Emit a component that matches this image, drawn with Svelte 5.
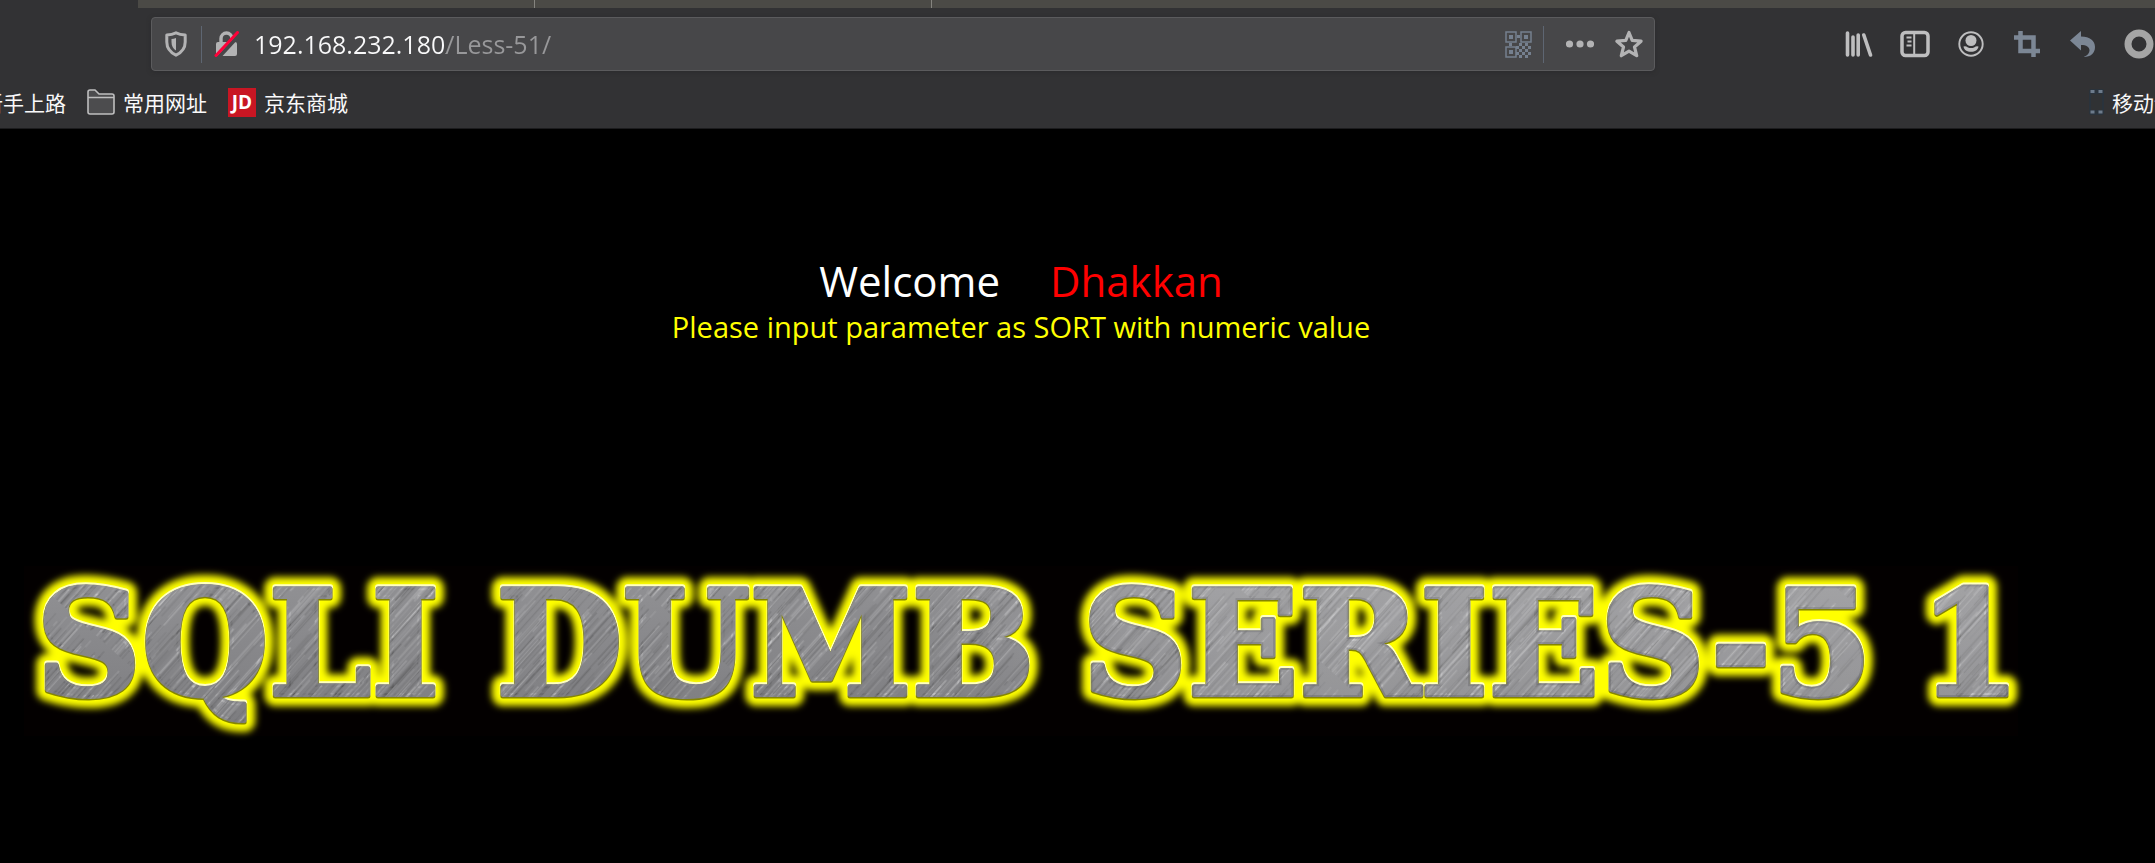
<script>
  let url = $state('192.168.232.180/Less-51/');

  // Pseudo-random diagonal scratches for the brushed-metal lettering
  let seed = 51;
  const rand = () => (seed = (seed * 16807) % 2147483647) / 2147483647;
  const scratches = Array.from({ length: 1100 }, () => ({
    x: rand() * 400,
    y: rand() * 400,
    len: 20 + rand() * 90,
    light: rand() > 0.55,
    opacity: 0.05 + rand() * 0.14
  }));

  const words = [
    { text: 'SQLI', x: 36 },
    { text: 'DUMB', x: 496 },
    { text: 'SERIES-5', x: 1082 },
    { text: '1', x: 1919 }
  ];

  const finder = [[0, 0], [15, 0], [0, 15]];
  const modules = [[12, 4], [4, 12], [14, 12], [20, 12], [11, 15], [17, 15], [23, 15], [14, 18], [20, 18], [11, 21], [17, 21], [23, 21], [14, 24], [20, 24]];
</script>

{#snippet lettering()}
  {#each words as w}<tspan x={w.x}>{w.text}</tspan>{/each}
{/snippet}

<div class="browser">
  <header>
    <div class="tabs"><span></span><span></span><span></span></div>

    <div class="toolbar">
      <div class="urlbar">
        <button class="shield" aria-label="Tracking protection">
          <svg width="22" height="26" viewBox="0 0 22 26"><path d="M11 1.8C8 3.2 5 3.8 1.8 4v7c0 6 3.7 10.500 9.200 13.200C16.500 21.500 20.200 17 20.200 11V4C17 3.800 14 3.200 11 1.800z" fill="none" stroke="#b3b3b4" stroke-width="3" stroke-linejoin="round"/><path d="M11 7v12.500C8 17.500 6.500 15 6.500 11V8C8 7.900 9.500 7.600 11 7z" fill="#b3b3b4"/></svg>
        </button>
        <span class="rule"></span>
        <button class="lock" aria-label="Connection is not secure">
          <svg width="26" height="26" viewBox="0 0 26 26"><path d="M7 12V7.500a5.500 5.500 0 0 1 11 0V12" fill="none" stroke="#b3b3b4" stroke-width="3.400"/><rect x="2" y="11" width="21" height="14" rx="2" fill="#b3b3b4"/><path d="M4 27L26 3" stroke="#474749" stroke-width="4"/><path d="M2 24.500L23.500 1.500" stroke="#ff0039" stroke-width="3" stroke-linecap="round"/></svg>
        </button>
        <input type="text" aria-label="Address" spellcheck="false" bind:value={url} />
        <button class="qr" aria-label="QR code">
          <svg width="27" height="27" viewBox="0 0 27 27" fill="#75808f">
            {#each finder as [x, y]}
              <rect x={x + 1} y={y + 1} width="10" height="10" fill="none" stroke="#75808f" stroke-width="1.500" />
              <rect x={x + 4} y={y + 4} width="4" height="4" />
            {/each}
            {#each modules as [x, y]}<rect {x} {y} width="3" height="3" />{/each}
          </svg>
        </button>
        <span class="rule"></span>
        <button class="dots" aria-label="Page actions">
          <svg width="28" height="8" viewBox="0 0 28 8" fill="#b3b3b4"><circle cx="3.500" cy="4" r="3.600"/><circle cx="14" cy="4" r="3.600"/><circle cx="24.500" cy="4" r="3.600"/></svg>
        </button>
        <button class="star" aria-label="Bookmark this page">
          <svg width="28" height="28" viewBox="0 0 28 28"><path d="M14 2.500l3.200 7.800 8.900.9-6.600 5.800 2.200 8.700L14 21.200l-7.700 4.500 2.200-8.700-6.600-5.800 8.900-.9z" fill="none" stroke="#b3b3b4" stroke-width="3.200" stroke-linejoin="round"/></svg>
        </button>
      </div>

      <div class="actions">
        <button aria-label="Library">
          <svg width="28" height="26" viewBox="0 0 28 26" stroke="#bebebf" stroke-width="3.600" stroke-linecap="round"><path d="M2.500 2v22M8 6v18M13.200 4v20M18.800 4l6.700 20"/></svg>
        </button>
        <button aria-label="Sidebars">
          <svg width="30" height="28" viewBox="0 0 30 28" fill="none" stroke="#bebebf"><rect x="2" y="2.500" width="26" height="23" rx="3.500" stroke-width="3.500"/><path d="M14.200 4v20" stroke-width="2"/><path d="M6.500 7.500h5M7.500 11.500h4M6.500 15.500h5" stroke-width="1.800"/></svg>
        </button>
        <button aria-label="Account">
          <svg width="26" height="26" viewBox="0 0 26 26"><circle cx="13" cy="13" r="11.700" fill="none" stroke="#bebebf" stroke-width="1.900"/><circle cx="13" cy="9.500" r="5.500" fill="#bebebf"/><path d="M5.500 15.500q2.500-.6 4 .7 3.500 1.800 7 0 1.500-1.300 4-.7c-.5 3.500-3.500 5.300-7.500 5.300s-7-1.800-7.500-5.300z" fill="#bebebf"/></svg>
        </button>
        <button aria-label="Screenshot">
          <svg width="26" height="26" viewBox="0 0 26 26" fill="none" stroke="#7c8795" stroke-width="4.500"><path d="M6.500 0v20H26M0 6.500h19.500V26"/></svg>
        </button>
        <button aria-label="Undo">
          <svg width="26" height="26" viewBox="0 0 26 26"><path d="M0 9.500L11 0v5.500C20 5.500 25 10 25 16c0 6-4 10-11.500 10 4-1.500 6-4 6-6.500 0-3.500-3-5.500-8.500-5.500v5.500z" fill="#7c8795"/></svg>
        </button>
        <button aria-label="Extension">
          <svg width="30" height="30" viewBox="0 0 30 30"><circle cx="15" cy="15" r="11" fill="none" stroke="#a5a5a5" stroke-width="7"/></svg>
        </button>
      </div>
    </div>

    <nav aria-label="Bookmarks">
      <a class="start" href="#start">新手上路</a>
      <a class="folder" href="#common">
        <svg width="28" height="26" viewBox="0 0 28 26"><path d="M1 23V3q0-2 2-2h5l4 4h13q2 0 2 2v16q0 2-2 2H3q-2 0-2-2z" fill="#4c4c4e" stroke="#bebebf" stroke-width="1.600"/><path d="M1 8.500h26" stroke="#bebebf" stroke-width="1.500"/></svg>
        常用网址
      </a>
      <a class="shop" href="#jd"><span class="jd">JD</span>京东商城</a>
      <a class="mobile" href="#mobile">
        <svg width="15" height="26" viewBox="0 0 15 26"><rect width="15" height="26" rx="2" fill="#2a333c"/><rect x="2" y="5" width="11" height="16" fill="#303234"/><path d="M1.500 2.500h4M9.500 2.500h4M1.500 23h4M9.500 23h4" stroke="#6c7b8b" stroke-width="3"/></svg>
        移动设备上的书签
      </a>
    </nav>
  </header>

  <main>
    <div class="message">
      <h1>Welcome <span>Dhakkan</span></h1>
      <p>Please input parameter as SORT with numeric value</p>
    </div>

    <svg class="banner" width="2042" height="200" viewBox="0 0 2042 200" role="img" aria-label="SQLI DUMB SERIES-5 1">
      <defs>
        <linearGradient id="steel" x1="0" y1="0" x2="0" y2="1">
          <stop offset="0" stop-color="#949497"/><stop offset=".5" stop-color="#88888b"/><stop offset="1" stop-color="#7c7c7f"/>
        </linearGradient>
        <linearGradient id="sheen" x1="0" y1="0" x2="1" y2="0">
          <stop offset=".45" stop-color="#fff" stop-opacity="0"/><stop offset=".6" stop-color="#fff" stop-opacity=".16"/><stop offset="1" stop-color="#fff" stop-opacity=".16"/>
        </linearGradient>
        <pattern id="brushed" width="400" height="400" patternUnits="userSpaceOnUse" patternTransform="rotate(42)">
          {#each scratches as s}
            <path d="M{s.x} {s.y}v{s.len}" stroke={s.light ? '#fff' : '#333'} stroke-opacity={s.opacity} stroke-width="1.500" />
          {/each}
        </pattern>
        <filter id="glow" x="-5%" y="-40%" width="110%" height="180%"><feGaussianBlur stdDeviation="3.500"/></filter>
      </defs>
      <rect x="24" y="17" width="1994" height="170" fill="#030000"/>
      <text y="146" fill="#ff0" stroke="#ff0" stroke-width="22" filter="url(#glow)">{@render lettering()}</text>
      <text y="145" fill="#fff" stroke="#ffffc0" stroke-width="6">{@render lettering()}</text>
      <text y="147" fill="#858500" stroke="#858500" stroke-width="5">{@render lettering()}</text>
      <text y="146" fill="url(#steel)" stroke="url(#steel)" stroke-width="4">{@render lettering()}</text>
      <text y="146" fill="url(#brushed)" stroke="url(#brushed)" stroke-width="4">{@render lettering()}</text>
      <text y="146" fill="url(#sheen)" stroke="none">{@render lettering()}</text>
    </svg>
  </main>
</div>

<style>
  :global(body) {
    margin: 0;
    background: #000;
  }
  .browser {
    overflow: hidden;
    min-height: 100vh;
    background: #000;
    font-family: 'Open Sans', 'Noto Sans CJK SC', sans-serif;
  }
  header {
    background: #323234;
    border-bottom: 1px solid #1c1c1e;
    overflow: hidden;
  }
  .tabs {
    display: flex;
    height: 8px;
    margin-left: 138px;
    background: #4b4a46;
  }
  .tabs span {
    box-sizing: border-box;
    width: 397px;
    border-right: 1px solid #85847f;
  }
  .tabs span:last-child {
    flex: 1;
    border: 0;
  }
  button {
    display: flex;
    align-items: center;
    justify-content: center;
    padding: 0;
    border: 0;
    background: none;
    flex: none;
  }
  svg {
    display: block;
    flex: none;
  }
  .toolbar {
    display: flex;
    align-items: center;
    padding: 9px 0 0 151px;
  }
  .urlbar {
    box-sizing: border-box;
    display: flex;
    align-items: center;
    flex: 1;
    min-width: 0;
    height: 54px;
    padding: 0 11px 0 13px;
    background: #474749;
    border: 1px solid #5b5b5d;
    border-radius: 4px;
    box-shadow: 0 1px 4px #2b2b2d;
  }
  .rule {
    flex: none;
    width: 1px;
    height: 37px;
    background: #5e6672;
  }
  .shield {
    margin-right: 14px;
  }
  .lock {
    margin: 0 14px 0 12px;
  }
  input {
    flex: 1;
    min-width: 0;
    height: 40px;
    padding: 0;
    border: 0;
    outline: 0;
    font: 25px 'Open Sans', sans-serif;
    color: transparent;
    background: linear-gradient(90deg, #f9f9fa 192px, #98989a 192px);
    -webkit-background-clip: text;
    background-clip: text;
  }
  .qr {
    margin-right: 11px;
  }
  .dots {
    margin: 0 21px 0 22px;
  }
  .actions {
    display: flex;
    margin: 0 -12px 0 176px;
  }
  .actions button {
    width: 56px;
    height: 54px;
  }
  nav {
    display: flex;
    align-items: center;
    height: 52px;
    padding-top: 5px;
    font-size: 21px;
    line-height: 30px;
    font-family: 'Noto Sans CJK SC', sans-serif;
  }
  nav a {
    display: flex;
    align-items: center;
    gap: 8px;
    flex: none;
    color: #f9f9fa;
    text-decoration: none;
    margin-right: 21px;
  }
  .start {
    margin-left: -18px;
  }
  .jd {
    width: 28px;
    height: 29px;
    background: #c81623;
    color: #fff;
    font: bold 19px/29px 'Open Sans', sans-serif;
    text-align: center;
  }
  .mobile {
    width: 66px;
    margin: 0 0 0 auto;
    white-space: nowrap;
  }
  main {
    padding-top: 120px;
  }
  .message {
    margin-right: 113px;
    text-align: center;
  }
  h1 {
    display: flex;
    justify-content: center;
    gap: 50px;
    margin: 0;
    font-size: 42px;
    line-height: 64px;
    font-weight: 400;
    color: #fff;
  }
  h1 span {
    color: #f00;
  }
  p {
    margin: 0;
    font-size: 29px;
    line-height: 28px;
    color: #ff0;
  }
  .banner {
    margin-top: 208px;
  }
  .banner text {
    font: bold 146px 'DejaVu Serif', serif;
    stroke-linejoin: round;
  }
</style>
